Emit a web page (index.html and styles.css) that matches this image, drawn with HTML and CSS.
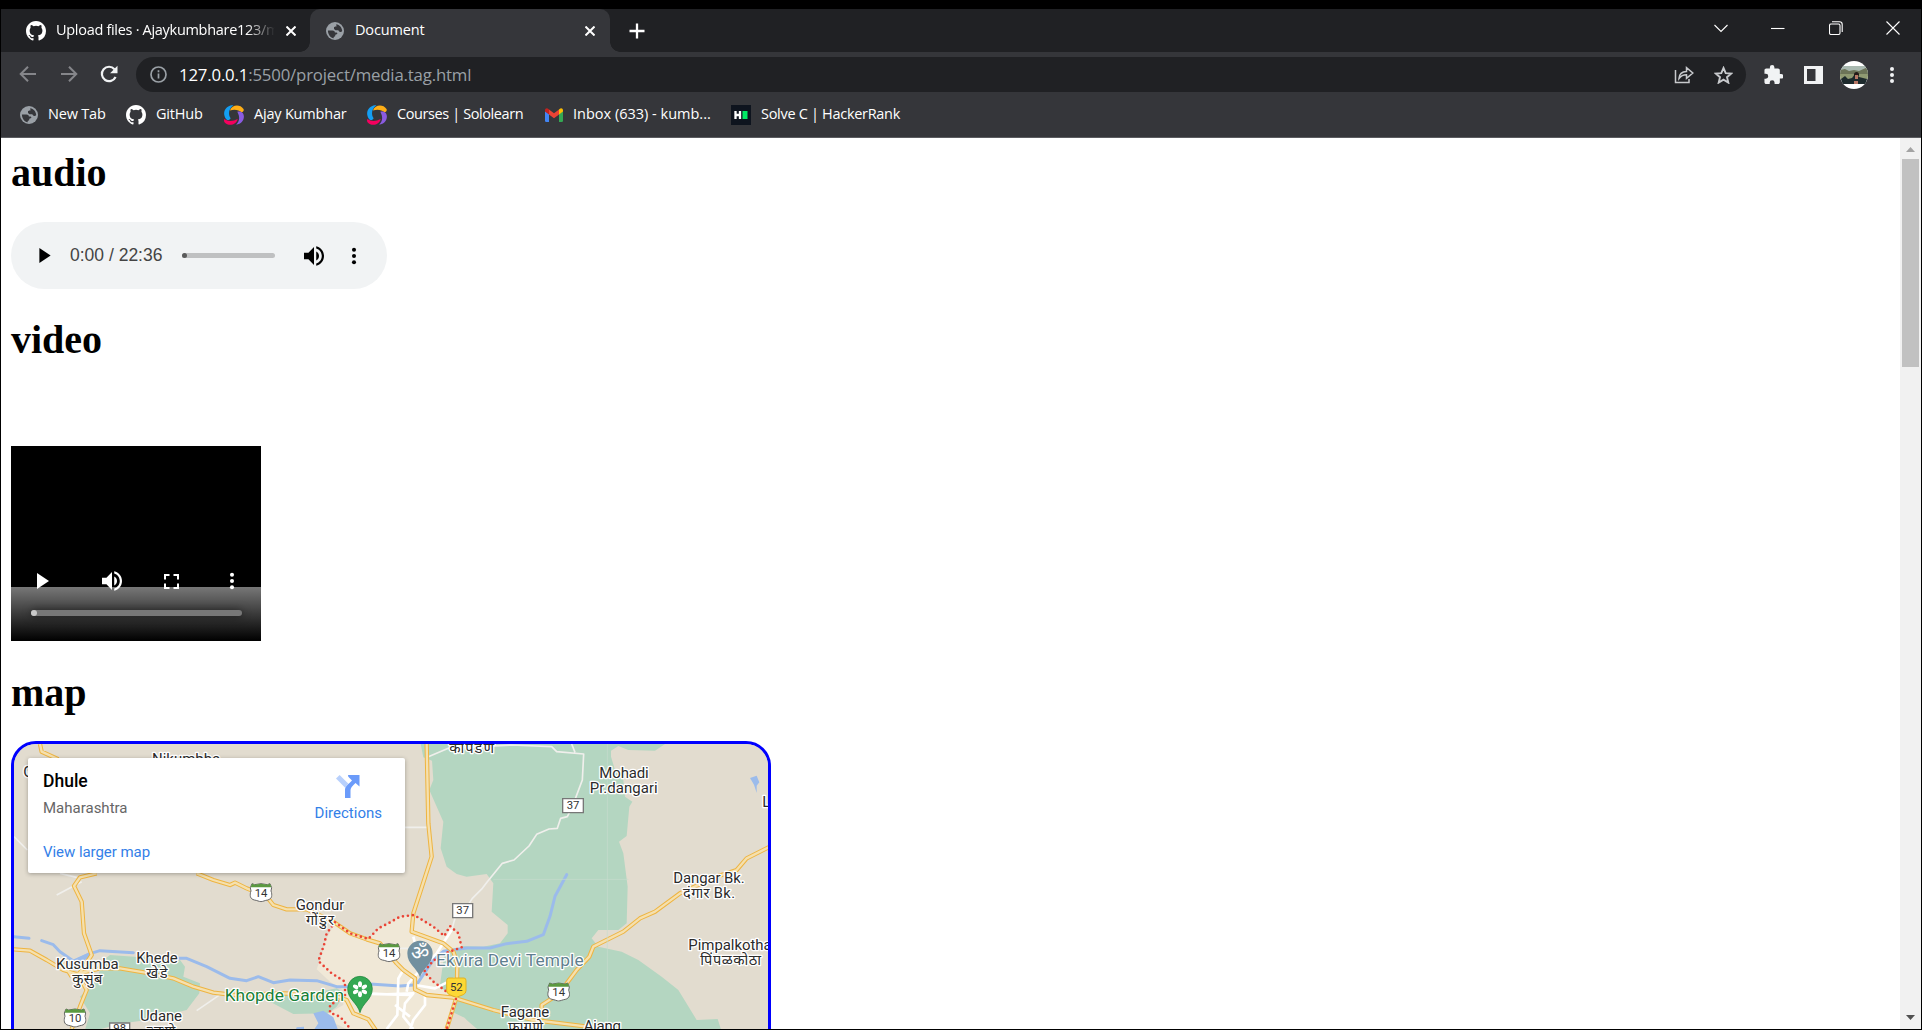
FILE: index.html
```html
<!DOCTYPE html>
<html lang="en">
<head>
<meta charset="utf-8">
<title>Document</title>
<link rel="stylesheet" href="styles.css">
</head>
<body>
<svg class="defs" width="0" height="0" aria-hidden="true">
  <symbol id="github" viewBox="0 0 16 16"><path fill="#fff" d="M8 0C3.58 0 0 3.58 0 8c0 3.54 2.29 6.53 5.47 7.59.4.07.55-.17.55-.38 0-.19-.01-.82-.01-1.49-2.01.37-2.53-.49-2.69-.94-.09-.23-.48-.94-.82-1.13-.28-.15-.68-.52-.01-.53.63-.01 1.08.58 1.23.82.72 1.21 1.87.87 2.33.66.07-.52.28-.87.51-1.07-1.78-.2-3.64-.89-3.64-3.95 0-.87.31-1.59.82-2.15-.08-.2-.36-1.02.08-2.12 0 0 .67-.21 2.2.82a7.6 7.6 0 0 1 4 0c1.53-1.04 2.2-.82 2.2-.82.44 1.1.16 1.92.08 2.12.51.56.82 1.27.82 2.15 0 3.07-1.87 3.75-3.65 3.95.29.25.54.73.54 1.48 0 1.07-.01 1.93-.01 2.2 0 .21.15.46.55.38A8.01 8.01 0 0 0 16 8c0-4.42-3.58-8-8-8z"/></symbol>
  <symbol id="globe" viewBox="0 0 18 18"><circle cx="9" cy="9" r="9" fill="#9aa0a6"/><path fill="#35363a" d="M10.200 2.200c3.400.6 5.900 3.400 6 6.800-.5 1-1.600 1.300-2.700.8l-1.300-1.600H9.500L8 7V5.200l1.200-.7h1.300zM1.900 8.400l4.600.1c1.600.1 2.300.8 2.400 1.900h1.600c.8.300 1 .9.700 1.700l-1.800.6-.3 1.600-1.400.7v1.200C4.500 15.600 1.900 12.500 1.900 8.400z"/></symbol>
  <symbol id="solo" viewBox="0 0 20 20">
    <path fill="#149ef2" d="M8 .3C3 .8-.3 5 .2 9.500c.3 2.700 1.500 4.500 2.700 5.300 1.400.7 3.300-.1 3.700-1.500C4 9.500 4.400 4 9.500.3z"/>
    <path fill="#fdae17" d="M5.900 5.500C8-.4 16-1 19.500 4c.8 1.500-.3 3.200-1.900 3.200C14.500 4.500 10 4 5.900 5.500z"/>
    <path fill="#8a5be0" d="M13.300 6.800c3.600-.9 6.600 1.200 6.600 4.800 0 4-3 7.700-7.700 8.200 3.400-3.700 4-7.800 1.100-13z"/>
    <path fill="#f5005e" d="M.4 14c3.300 2.500 8.300 2.700 13.300 0C12.500 20 4.500 21.800.7 17.400c-.8-1-.9-2.200-.3-3.400z"/>
  </symbol>
  <symbol id="play" viewBox="0 0 12 16"><path fill="currentColor" d="M0 0v16l12-8z"/></symbol>
  <symbol id="volume" viewBox="3 3 18 18"><path fill="currentColor" d="M3 9v6h4l5 5V4L7 9H3zm13.500 3c0-1.770-1.020-3.290-2.500-4.030v8.050c1.480-.73 2.500-2.250 2.500-4.020zM14 3.230v2.060c2.890.86 5 3.540 5 6.710s-2.110 5.850-5 6.710v2.060c4.010-.91 7-4.490 7-8.770s-2.990-7.860-7-8.770z"/></symbol>
  <symbol id="dots" viewBox="0 0 6 20"><g fill="currentColor"><circle cx="3" cy="3" r="2.250"/><circle cx="3" cy="10" r="2.250"/><circle cx="3" cy="17" r="2.250"/></g></symbol>
  <symbol id="shield" viewBox="0 0 70 60"><path fill="#fff" stroke="#666" stroke-width="3" d="M8 4l8 3 19-3 19 3 8-3 5 12-2 10c5 12 3 24-10 27-8 1-15 5-20 5s-12-4-20-5C2 50 0 38 5 26L3 16z"/><path fill="#5b9940" d="M8 4l8 3 19-3 19 3 8-3 4 11H4z"/></symbol>
  <path id="roads" d="M42 658l48 4 50 28 50 30 40 12 70-17h60l90 15 70 15 60 25 60 18 60 7 150-5 150 5 40 15 20 40 45 18 22 32M290 430l-50 12-18 26 23 47 7 95 23 65-40 60 25 45-20 50-25 67M120 42l5 23 50 23M190 700l25 40M590 430l50 20 50 15 15-7 35 17 60 25 20 25 40 13h60l80 37 50 35 50 18 40 12 50 60 20 20 35 25v33l35 17 80 8 120 37 120 30 180 22M1280 42l5 238 10 100-55 170-5 55 95 35 30 25 12 35-2 100-30 97M2310 350l-70 35-30 35-60 20-110 50-75 55-45 20-50 40-90 45-12 30-38 40-30 40-20 30-55 35v40"/>
</svg>

<div class="window">
  <div class="tabstrip">
    <div class="tab">
      <svg class="fav" width="20" height="20"><use href="#github"/></svg>
      <span class="tab-title fade">Upload files · Ajaykumbhare123/m</span>
      <svg class="x" width="10" height="10" viewBox="0 0 10 10"><path d="M.5.5l9 9m0-9l-9 9"/></svg>
    </div>
    <div class="tab active">
      <svg class="fav" width="18" height="18"><use href="#globe"/></svg>
      <span class="tab-title">Document</span>
      <svg class="x" width="10" height="10" viewBox="0 0 10 10"><path d="M.5.5l9 9m0-9l-9 9"/></svg>
    </div>
    <svg class="plus" width="16" height="16" viewBox="0 0 16 16"><path d="M8 .5v15M.5 8h15"/></svg>
    <div class="winctl">
      <svg width="14" height="14" viewBox="0 0 14 14"><path d="M.5 4L7 10.500 13.500 4"/></svg>
      <svg width="14" height="14" viewBox="0 0 14 14"><path d="M0 7.500h13.500"/></svg>
      <svg width="14" height="14" viewBox="0 0 14 14"><rect x=".5" y="3" width="10.500" height="10.500" rx="1.500"/><path d="M3 .8h7.500a2.700 2.700 0 0 1 2.700 2.700V11"/></svg>
      <svg width="14" height="14" viewBox="0 0 14 14"><path d="M.5.5l13 13m0-13l-13 13"/></svg>
    </div>
  </div>

  <div class="toolbar">
    <div class="nav">
      <svg width="18" height="18" viewBox="0 0 18 18" stroke="#85868a"><path d="M17 9H2m7-7.300L1.700 9 9 16.300"/></svg>
      <svg width="18" height="18" viewBox="0 0 18 18" stroke="#85868a"><path d="M1 9h15M9 1.700L16.300 9 9 16.300"/></svg>
      <svg width="18" height="18" viewBox="0 0 18 18" stroke="#f1f3f4"><path stroke-width="2.200" d="M15.600 12A7.200 7.200 0 1 1 14.500 4.200"/><path stroke="none" fill="#f1f3f4" d="M17.500.8v7.400h-7.400z"/></svg>
    </div>
    <div class="omnibox">
      <svg width="17" height="17" viewBox="0 0 17 17" fill="none" stroke="#9aa0a6" stroke-width="1.700"><circle cx="8.500" cy="8.500" r="7.500"/><path d="M8.500 7.500v5M8.500 4.300v1.900"/></svg>
      <span class="url"><b>127.0.0.1</b>:5500/project/media.tag.html</span>
      <svg class="share" width="20" height="18" viewBox="0 0 20 18"><path d="M1.500 4v12.500h13.500V13M5 12.500c.3-4.700 3-6.900 7.500-7V1.700L18.800 7l-6.300 5.300V8.800c-3.500 0-5.500 1-7.500 3.700z"/></svg>
      <svg class="star" width="19" height="18" viewBox="0 0 19 18"><path d="M9.500 2l2.200 5.100 5.500.5-4.200 3.600 1.300 5.400-4.800-2.900-4.800 2.900L6 11.200 1.800 7.600l5.500-.5z"/></svg>
    </div>
    <div class="actions">
      <svg width="19" height="19" viewBox="1.500 1 21 21"><path fill="#f1f3f4" d="M20.500 11H19V7c0-1.100-.9-2-2-2h-4V3.500a2.500 2.500 0 0 0-5 0V5H4c-1.100 0-1.990.9-1.990 2v3.800H3.500a2.700 2.700 0 0 1 0 5.400H2V20c0 1.100.9 2 2 2h3.800v-1.500a2.700 2.700 0 0 1 5.400 0V22H17c1.100 0 2-.9 2-2v-4h1.500a2.500 2.500 0 0 0 0-5z"/></svg>
      <svg width="19" height="18" viewBox="0 0 19 18"><path fill="#f1f3f4" fill-rule="evenodd" d="M0 0h19v18H0zM3 3v12h8.500V3z"/></svg>
      <svg class="avatar" width="28" height="28" viewBox="0 0 28 28"><path fill="#fff" d="M0 0h28v28H0z"/><path fill="#a9b9b0" d="M0 5h28v9H0z"/><path fill="#6c7458" d="M0 9l5-1 4 2 5-1 5 1 9-4v9H0z"/><path fill="#8f9a72" d="M0 13h28v5H0z"/><path fill="#1d2a2c" d="M1 18l4-3 3 3 4-1 3-4 4 3 8 2-1 5H2z"/><circle cx="16.500" cy="13.500" r="2.500" fill="#241b18"/><path fill="#b97866" d="M15 14h3v4h-3zM14 20h4v3h-4z"/></svg>
      <svg class="menu" width="6" height="18" viewBox="0 0 6 18"><g fill="#f1f3f4"><circle cx="3" cy="3" r="2"/><circle cx="3" cy="9" r="2"/><circle cx="3" cy="15" r="2"/></g></svg>
    </div>
  </div>

  <div class="bookmarks">
    <div class="bm b1"><svg width="18" height="18"><use href="#globe"/></svg><span>New Tab</span></div>
    <div class="bm b2"><svg width="20" height="20"><use href="#github"/></svg><span>GitHub</span></div>
    <div class="bm b3"><svg width="20" height="20"><use href="#solo"/></svg><span>Ajay Kumbhar</span></div>
    <div class="bm b4"><svg width="20" height="20"><use href="#solo"/></svg><span>Courses | Sololearn</span></div>
    <div class="bm b5"><svg width="18" height="14" viewBox="0 0 18 14"><path fill="#4285f4" d="M0 3l4 3v8H1.300A1.300 1.300 0 0 1 0 12.700z"/><path fill="#34a853" d="M18 3l-4 3v8h2.700a1.300 1.300 0 0 0 1.300-1.300z"/><path fill="#ea4335" d="M4 1.500l5 3.800 5-3.800V6.500L9 10.300 4 6.500z"/><path fill="#c5221f" d="M0 2.200C0 .3 2-.6 3.400.9L4 1.500v5L0 3.500z"/><path fill="#fbbc04" d="M18 2.200c0-1.900-2-2.800-3.400-1.300l-.6.600v5l4-3z"/></svg><span>Inbox (633) - kumb...</span></div>
    <div class="bm b6"><svg width="20" height="20" viewBox="0 0 20 20"><path fill="#0e141e" d="M0 0h20v20H0z"/><path stroke="#fff" stroke-width="2.300" fill="none" d="M4.500 6v8M9 6v8M4.500 10H9"/><path fill="#00ea64" d="M11.500 6h5v8h-5z"/></svg><span>Solve C | HackerRank</span></div>
  </div>

  <div class="viewport">
    <main class="page">
      <h1>audio</h1>
      <div class="audio">
        <svg class="a-play" width="12" height="15"><use href="#play"/></svg>
        <span class="time">0:00 / 22:36</span>
        <div class="a-track"><i></i></div>
        <svg class="a-vol" width="20" height="20"><use href="#volume"/></svg>
        <svg class="a-dots" width="6" height="18"><use href="#dots"/></svg>
      </div>
      <h1 class="h-video">video</h1>
      <div class="video">
        <div class="v-buttons">
          <svg class="v-play" width="12" height="16"><use href="#play"/></svg>
          <svg class="v-vol" width="20" height="20"><use href="#volume"/></svg>
          <svg class="v-full" width="15" height="15" viewBox="0 0 15 15"><path fill="none" stroke="#fff" stroke-width="2" d="M1 5.500V1h4.500M9.500 1H14v4.500M14 9.500V14H9.500M5.500 14H1V9.500"/></svg>
          <svg class="v-dots" width="6" height="18"><use href="#dots"/></svg>
        </div>
        <div class="v-shade"><div class="v-track"><i></i></div></div>
      </div>
      <h1 class="h-map">map</h1>
      <div class="map">
        <svg class="map-art" width="754" height="285" viewBox="42 42 2262 855" preserveAspectRatio="xMinYMin slice">
          <path fill="#e2dccf" d="M0 0h2400v900H0z"/>
          <g fill="#b4d6c1">
            <path d="M1262 42l8 40 26 10 4 58-12 30 42 95-8 80 18 55 30 22 30 8 60-8 20 28-5 85 48 40v25l-23 30-50 10-65-2-50 10-20 142 20 40 60 25 35 40h735l-12-38-63 3-55-90-50-40-70-50-50-25-70-15-20-25 20-25h60l25-20 3-110-13-100-13-35 23-17 8-88 9-15-22-15-5-50-25-30-12-40v-18l22-14 30 12 80 2 30-20z"/>
            <path d="M310 690l20-15 210 15 15 20-5 30 50 20-2 30-38 50-120 30-70 10-80 20h-35l15-50-30-50 50-50z"/>
            <path d="M790 805l80-10 90-10 50-10 25 15-25 40-25 20-105 2z"/>
          </g>
          <path fill="#e2dccf" d="M1345 840l45 22 45 38h-110z"/>
          <path fill="#f0e8d7" d="M1005 577l45 33 55 17 30-32 30-15 35-20 42-5 58 35 33 28 17-30 25 22 10 42-45 16-40 24-28 33 28 30 37 28 33 17-30 100h-295l-30-15-30-12v-23l45-25v-45l-40-25-40-37 17-48 8-35z"/>
          <path fill="#9bbbeb" d="M940 850l30-8 30 20 15 40h-75l15-22zM890 892l22-2v10h-25zM2250 144l20-7 8 20-8 10v22l-8-25z"/>
          <path fill="none" stroke="#9bbbeb" stroke-width="9" stroke-linejoin="round" stroke-linecap="round" d="M42 620l45 5M125 632l35 12 20 21 40 28 50-22 30-9 100 6M530 685h30l60 25 70 35 50 7 35-12 45 18 50-8 80 2 60 18h40l60-8 90 6 50-4 50-75 30-25 70-10h70l50-13 60-7 50-20 20-55 15-60 35-65"/>
          <path stroke="#9bbbeb" stroke-width="14" d="M228 695l50-25"/>
          <g fill="none" stroke="#f0efec" stroke-width="5" stroke-linejoin="round">
            <path d="M42 320l40 40M170 495l75-40M180 430l50 12M1210 292h75M1285 80l60-25 190-10 120 5 15 15 81 7-4 78-30 80-15 30-20 5-10 30-25 2-37 16-23 35-45 42-35 10-45 55-15 20-30 30-25 40M1715 42l10 25M590 842l70-48M1355 600l10-35M1200 655h30"/>
            <path stroke="#fff" stroke-width="8" d="M1355 600l-45 70-40 40-45 50-5 25M1210 720l-15 25-3 110-32 42M1100 790l60 3 80-3-25 30-5 40 30 37M1050 790l180 5M1230 860l-45-35M1275 795v30l-35 45-10 30M1245 765l60 10 60-30M1240 620l10 40"/>
          </g>
          <g fill="none" stroke-linejoin="round">
            <use href="#roads" stroke="#eeb440" stroke-width="13"/>
            <use href="#roads" stroke="#f5e0ae" stroke-width="7"/>
          </g>
          <path fill="none" stroke="#ea4335" stroke-width="8" stroke-linecap="round" stroke-dasharray="0 15" d="M1005 577l45 33 55 17 30-32 30-15 35-20 42-5 58 35 33 28 17-30 25 22 10 42-45 16-40 24-28 33 28 30 37 28 33 17-30 97M1005 577l-25 33-8 35-17 48 40 37 40 25v45l-45 25v23l30 12 30 35"/>
          <path stroke="#c8ddcf" stroke-width="2" d="M1822 42v855M1480 448h405"/>

          <path fill="#72909f" d="M1260 742c-8-28-38-38-38-72a38 38 0 0 1 76 0c0 34-30 44-38 72z"/>
          <path fill="#34a853" stroke="#188038" stroke-width="2" d="M1080 848c-8-30-37-40-37-72a37 37 0 0 1 74 0c0 32-29 42-37 72z"/>
          <g fill="#fff" transform="translate(1080 778)"><ellipse cy="-15" rx="6" ry="9"/><ellipse cy="-15" rx="6" ry="9" transform="rotate(60)"/><ellipse cy="-15" rx="6" ry="9" transform="rotate(120)"/><ellipse cy="-15" rx="6" ry="9" transform="rotate(180)"/><ellipse cy="-15" rx="6" ry="9" transform="rotate(240)"/><ellipse cy="-15" rx="6" ry="9" transform="rotate(300)"/></g>
          <text x="1260" y="690" font-size="60" fill="#fff" text-anchor="middle">ॐ</text>
          <use href="#shield" x="748" y="457" width="70" height="60"/>
          <use href="#shield" x="1132" y="637" width="70" height="60"/>
          <use href="#shield" x="190" y="833" width="70" height="60"/>
          <use href="#shield" x="1641" y="755" width="70" height="60"/>
          <g fill="#fff" stroke="#777" stroke-width="4"><path d="M1688 206h62v42h-62zM1358 521h60v42h-60zM329 879h60v42h-60z"/></g>
          <path fill="#fdd835" stroke="#e0b224" stroke-width="3" d="M1346 744h46q6 0 6 8v30q0 8-8 12l-21 8-21-8q-8-4-8-12v-30q0-8 6-8z"/>
          <g class="nums">
            <text x="783" y="501">14</text><text x="1167" y="681">14</text><text x="225" y="876">10</text><text x="1676" y="799">14</text>
            <text x="1719" y="238">37</text><text x="1388" y="553">37</text><text x="359" y="906">98</text><text x="1369" y="783">52</text>
          </g>
          <g class="places">
            <text x="558" y="103" textLength="204">Nikumbhe</text>
            <text x="97" y="140">Ga</text>
            <text x="960" y="540" textLength="146">Gondur</text><text x="960" y="585" class="hi" textLength="84">गोंडुर</text>
            <text x="262" y="718" textLength="188">Kusumba</text><text x="262" y="763" class="hi" textLength="90">कुसुंब</text>
            <text x="471" y="699" textLength="124">Khede</text><text x="471" y="743" class="hi" textLength="64">खेडे</text>
            <text x="483" y="872" textLength="126">Udane</text><text x="483" y="917" class="hi" textLength="86">उडाणे</text>
            <text x="1415" y="69" class="hi" textLength="134">कापडणे</text>
            <text x="1872" y="145" textLength="148">Mohadi</text><text x="1871" y="190" textLength="204">Pr.dangari</text>
            <text x="2127" y="460" textLength="214">Dangar Bk.</text><text x="2127" y="504" class="hi" textLength="156">दंगार Bk.</text>
            <text x="2190" y="660" textLength="250">Pimpalkotha</text><text x="2192" y="704" class="hi" textLength="182">पिंपळकोठा</text>
            <text x="1575" y="862" textLength="146">Fagane</text><text x="1577" y="906" class="hi" textLength="104">फागणे</text>
            <text x="1807" y="902" textLength="112">Ajang</text>
            <text x="2311" y="232">La</text>
          </g>
          <text class="poi" x="674" y="813" textLength="358" fill="#188038">Khopde Garden</text>
          <text class="poi" x="1308" y="707" textLength="443" fill="#5f7f8f">Ekvira Devi Temple</text>
        </svg>
        <div class="card">
          <div class="card-main">
            <div class="place">Dhule</div>
            <div class="region">Maharashtra</div>
            <a class="larger">View larger map</a>
          </div>
          <div class="directions">
            <svg width="24" height="24" viewBox="0 0 24 24"><path fill="#b8d0fc" d="M0 4.500L3.600 1l8.600 8.500-3 4.200z"/><path fill="#6b9bfa" d="M9 24V16c0-3.500 3-5.500 7-9.500L12.300 2.700 12 1h11.500v11.500l-4-3.400c-3.500 3.500-5 5-5 7.200V24z"/></svg>
            <a>Directions</a>
          </div>
        </div>
      </div>
    </main>
    <div class="scrollbar">
      <svg width="9" height="5" viewBox="0 0 9 5"><path fill="#a3a3a3" d="M4.500 0L9 5H0z"/></svg>
      <div class="thumb"></div>
      <svg class="down" width="9" height="5" viewBox="0 0 9 5"><path fill="#505050" d="M4.500 5L9 0H0z"/></svg>
    </div>
  </div>
</div>
</body>
</html>
```
FILE: styles.css
```css
* { box-sizing: border-box; }
html, body { margin: 0; height: 100%; overflow: hidden; background: #000; }
svg { display: block; flex: none; }
.defs { position: absolute; }
.window {
  height: 1030px; padding: 9px 1px 1px; display: flex; flex-direction: column;
  font-family: "Open Sans", "Noto Sans", sans-serif; font-size: 14.5px; color: #fff;
}
.tabstrip { height: 43px; flex: none; background: #202124; display: flex; align-items: center; }
.tab { height: 43px; width: 309px; display: flex; align-items: center; padding: 0 14px 0 25px; position: relative; }
.tab-title { margin-left: 10px; flex: 1; white-space: nowrap; overflow: hidden; letter-spacing: -.15px; padding-bottom: 2px; }
.fade { margin-right: 11px; letter-spacing: -.3px; -webkit-mask-image: linear-gradient(90deg, #000 87%, transparent); mask-image: linear-gradient(90deg, #000 87%, transparent); }
.tab.active { width: 300px; background: #35363a; border-radius: 10px 10px 0 0; padding: 0 15px 0 16px; }
.active .tab-title { margin-left: 11px; }
.tab.active::before, .tab.active::after { content: ""; position: absolute; bottom: 0; width: 10px; height: 10px; }
.tab.active::before { left: -10px; background: radial-gradient(circle at 0 0, #202124 9.5px, #35363a 10px); }
.tab.active::after { right: -10px; background: radial-gradient(circle at 100% 0, #202124 9.5px, #35363a 10px); }
.x, .plus { fill: none; stroke: #fff; stroke-width: 2; }
.plus { margin-left: 19px; stroke-width: 2.3; }
.winctl { margin: 0 21px 6px auto; display: flex; gap: 43.3px; fill: none; stroke: #fff; stroke-width: 1.1; }

.toolbar { height: 41px; flex: none; background: #35363a; display: flex; align-items: center; padding-top: 4px; }
.nav { display: flex; gap: 22.5px; padding-left: 18px; width: 135px; fill: none; stroke-width: 2; }
.nav svg { margin-bottom: 1px; }
.omnibox { width: 1610px; height: 35px; border-radius: 18px; background: #202124; display: flex; align-items: center; padding: 0 13px 0 14px; }
.url { margin-left: 12px; padding-bottom: 1px; font-size: 16.8px; color: #9aa0a6; flex: 1; letter-spacing: -.18px; }
.url b { font-weight: 400; color: #fff; }
.share, .star { fill: none; stroke: #c7c9cc; stroke-width: 1.5; }
.star { margin-left: 20px; stroke-width: 1.9; }
.actions { display: flex; align-items: center; margin-left: 18px; }
.actions svg + svg { margin-left: 21px; }
.actions svg + .avatar { border-radius: 50%; margin-left: 17px; }

.bookmarks { height: 45px; flex: none; background: #35363a; border-bottom: 1px solid #5b5c60; display: flex; align-items: center; padding-left: 19px; }
.bm { display: flex; align-items: center; gap: 10px; white-space: nowrap; letter-spacing: -.2px; }
.bm span { padding-bottom: 3px; }
.b1 { width: 106px; }
.b2 { width: 98px; }
.b3 { width: 143px; }
.b4 { width: 178px; letter-spacing: -.4px; }
.b5 { width: 186px; letter-spacing: 0; }
.b6 { letter-spacing: -.3px; }

.viewport { flex: 1; min-height: 0; display: flex; background: #fff; overflow: hidden; }
.page { flex: 1; padding: 12px 10px 0; overflow: hidden; color: #000; }
h1 { margin: 0; font: bold 40px/46px "Liberation Serif", serif; }
.audio { margin-top: 26px; width: 376px; height: 67px; border-radius: 34px; background: #f1f3f4; display: flex; align-items: center; padding-left: 28px; }
.time { margin-left: 19px; font: 17.5px "Liberation Sans", sans-serif; color: #444; width: 93px; white-space: nowrap; }
.a-track { margin-left: 19px; width: 93px; height: 5px; border-radius: 3px; background: #bfc0c1; }
.a-track i { display: block; width: 5px; height: 5px; border-radius: 3px; background: #5a5a5a; }
.a-vol { margin-left: 29px; }
.a-dots { margin-left: 27px; }
.h-video { margin-top: 28px; }
.video { margin-top: 83px; width: 250px; height: 195px; background: #000; display: flex; flex-direction: column; color: #fff; padding-top: 125px; }
.v-buttons { display: flex; align-items: center; height: 20px; margin-bottom: -4px; padding-left: 26px; position: relative; }
.v-vol { margin-left: 53px; }
.v-full { margin-left: 42px; }
.v-dots { margin-left: 50px; }
.v-shade { flex: 1; background: linear-gradient(#777, #3a3a3a 50%, #000); padding: 23px 19px 0 20px; }
.v-track { height: 6px; border-radius: 3px; background: #777; box-shadow: 0 0 8px #0008; }
.v-track i { display: block; width: 6px; height: 6px; border-radius: 3px; background: #c9c9c9; }
.h-map { margin-top: 29px; }
.map { margin-top: 25px; width: 760px; height: 563px; border: 3px solid #00f; border-radius: 25px; position: relative; overflow: hidden; background: #e2dccf; }
.map-art text { font-family: Roboto, "Noto Sans", sans-serif; }
.places text { font-size: 45px; text-anchor: middle; fill: #2b2b2b; stroke: #fff; stroke-width: 8px; stroke-linejoin: round; paint-order: stroke; }
.places .hi { font-size: 44px; }
.nums text { font-size: 34px; text-anchor: middle; fill: #333; }
.map-art .poi { font-size: 52px; stroke: #fff; stroke-width: 7px; stroke-linejoin: round; paint-order: stroke; }
.card { position: absolute; left: 14px; top: 14px; width: 377px; height: 115px; background: #fff; border-radius: 2px; box-shadow: 0 1px 4px rgba(0,0,0,.3); display: flex; justify-content: space-between; font: 15px/20px Roboto, sans-serif; padding: 13px 23px 0 15px; }
.place { font-weight: 500; font-size: 17.5px; color: #000; }
.region { color: #666; margin-top: 7px; }
.larger { display: block; margin-top: 24px; color: #3380e8; letter-spacing: -.05px; }
.directions { display: flex; flex-direction: column; align-items: center; padding-top: 3px; color: #3380e8; }
.directions a { margin-top: 5px; }
.scrollbar { width: 21px; background: #f1f1f1; display: flex; flex-direction: column; align-items: center; padding: 9px 1px 9px 0; }
.thumb { margin-top: 7px; width: 17px; height: 208px; background: #c1c1c1; }
.down { margin-top: auto; }
```
